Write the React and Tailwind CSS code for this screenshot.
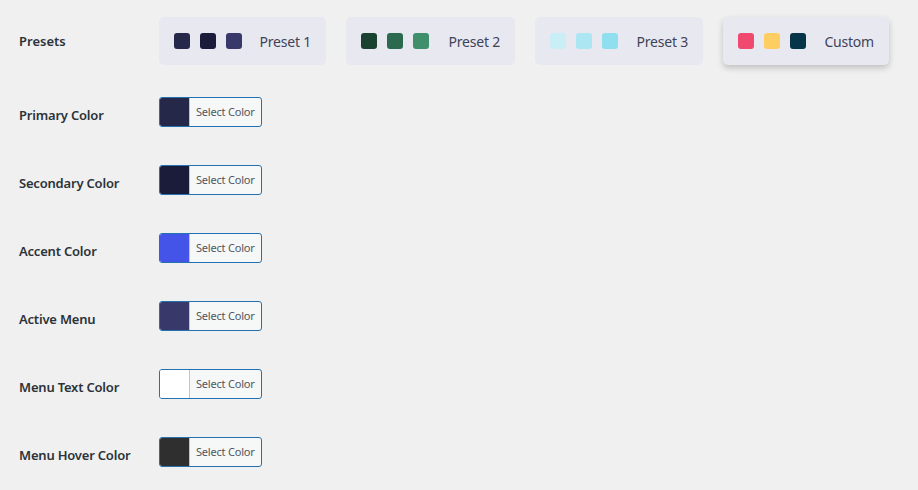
import React from "react";

const presets = [
  { name: "Preset 1", w: "w-[167px]", colors: ["#262849", "#1b1c3a", "#38386a"] },
  { name: "Preset 2", w: "w-[169px]", colors: ["#1a4230", "#2c6a4f", "#3f8f6d"] },
  { name: "Preset 3", w: "w-[168px]", colors: ["#c9eef6", "#ade6f3", "#90dfef"] },
  { name: "Custom", w: "w-[166px]", colors: ["#f0496f", "#ffce62", "#063549"], active: true },
];

const fields = [
  { label: "Primary Color", color: "#262849" },
  { label: "Secondary Color", color: "#1b1c3a" },
  { label: "Accent Color", color: "#4453e8" },
  { label: "Active Menu", color: "#38386a" },
  { label: "Menu Text Color", color: "#ffffff" },
  { label: "Menu Hover Color", color: "#2f2f2f" },
];

function ColorButton({ color }) {
  return (
    <button className="flex h-[30px] w-[103px] items-stretch overflow-hidden rounded-[3px] border border-[#2271b1] bg-[#f6f7f7]">
      <span className="w-[30px] border-r border-[#c3c4c7]" style={{ backgroundColor: color }} />
      <span className="flex flex-1 items-center pl-[6px] text-[11px] tracking-[-0.2px] text-[#50575e]">Select Color</span>
    </button>
  );
}

export default function App() {
  return (
    <div className="min-h-[490px] w-[918px] bg-[#f0f0f1] pl-[19px] text-[#1d2327]" style={{ fontFamily: '"Noto Sans", "Open Sans", sans-serif' }}>
      {/* Presets */}
      <div className="flex items-center pt-[17px]">
        <div className="w-[140px] pt-px text-[13px] font-semibold text-[#2c3338]">Presets</div>
        <div className="flex gap-5">
          {presets.map((p) => (
            <div
              key={p.name}
              className={`flex h-12 items-center justify-between rounded-[5px] bg-[#e8e8f1] px-[15px] ${p.w} ${p.active ? "shadow-[0_3px_6px_rgba(0,0,0,0.2)]" : ""}`}
            >
              <div className="flex gap-[10px]">
                {p.colors.map((c, i) => (
                  <span key={i} className="h-4 w-4 rounded-[3px]" style={{ backgroundColor: c }} />
                ))}
              </div>
              <span className="text-[14px] tracking-[-0.2px] text-[#3f4357]">{p.name}</span>
            </div>
          ))}
        </div>
      </div>

      {/* Color fields */}
      <div className="pt-[17px]">
        {fields.map((f) => (
          <div key={f.label} className="flex h-[68px] items-start">
            <div className="w-[140px] pt-[24px] text-[13px] font-semibold leading-[18px] tracking-[-0.2px] text-[#2c3338]">{f.label}</div>
            <div className="pt-[15px]">
              <ColorButton color={f.color} />
            </div>
          </div>
        ))}
      </div>
    </div>
  );
}
